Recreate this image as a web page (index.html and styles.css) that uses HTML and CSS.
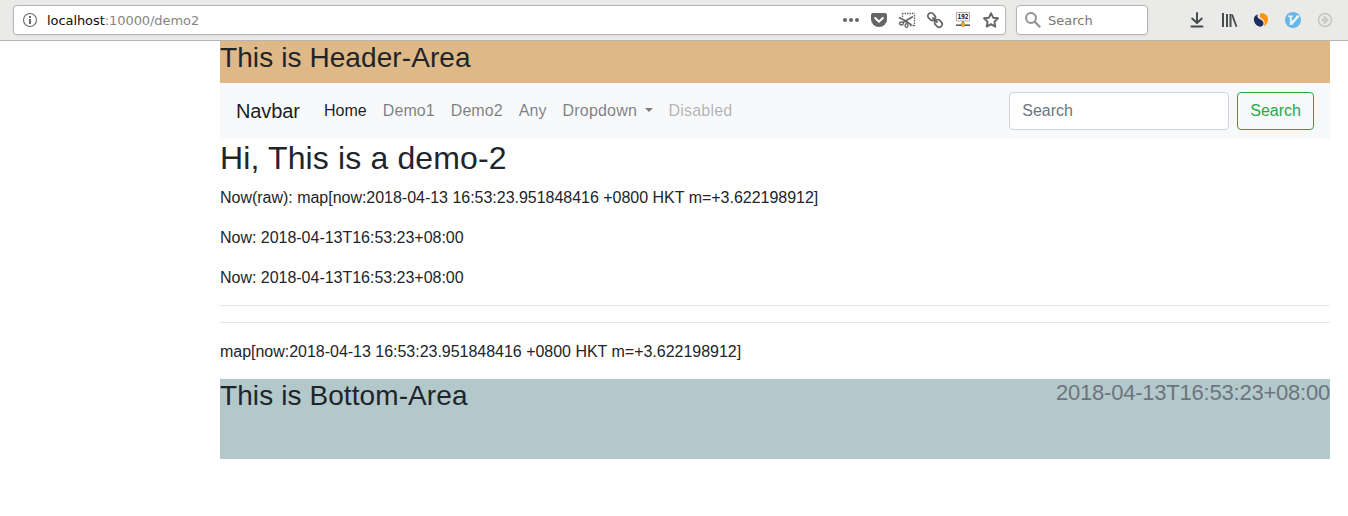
FILE: index.html
```html
<!DOCTYPE html>
<html lang="en">
<head>
<meta charset="utf-8">
<title>demo2</title>
<link rel="stylesheet" href="styles.css">
</head>
<body>
<div class="toolbar">
  <div class="field url-bar">
    <svg class="icon info" viewBox="0 0 16 16"><circle cx="8" cy="8" r="6.500" fill="none" stroke="#6a6a6a" stroke-width="1.100"/><path d="M7 4h2v2H7zM7 7h2v5H7z" fill="#6a6a6a"/></svg>
    <span class="url"><span class="host">localhost</span>:10000/demo2</span>
    <div class="page-actions">
      <svg class="icon" viewBox="0 0 16 16" fill="#666"><circle cx="2" cy="8" r="2"/><circle cx="8" cy="8" r="2"/><circle cx="14" cy="8" r="2"/></svg>
      <svg class="icon" viewBox="0 0 16 16"><path d="M2 1h12a2 2 0 0 1 2 2v4.500a8 7.500 0 0 1-16 0V3a2 2 0 0 1 2-2z" fill="#666"/><path d="M4.200 6L8 9.700 11.800 6" fill="none" stroke="#fff" stroke-width="2" stroke-linecap="round" stroke-linejoin="round"/></svg>
      <svg class="icon" viewBox="0 0 16 16" fill="none" stroke="#666"><path d="M3 1.500h13M15.500 3v11M3.500 1v4M11 13.500h5" stroke-width="1.300" stroke-dasharray="1.500 1"/><path d="M0 5.500L6 8.500 12.500 13M14 4.500L4 10.500" stroke-width="1.600"/><ellipse cx="2.400" cy="11.500" rx="1.900" ry="1.500" stroke-width="1.400"/><ellipse cx="7.500" cy="13.500" rx="1.400" ry="1.900" stroke-width="1.400"/><path d="M7 8.500l.6 3.500" stroke-width="1.400"/></svg>
      <svg class="icon" viewBox="0 0 16 16" fill="none" stroke="#666" stroke-width="1.700"><g transform="rotate(45 8 8)"><rect x="-.8" y="5" width="8" height="6" rx="2.800"/><rect x="8.800" y="5" width="8" height="6" rx="2.800"/><path d="M4.500 8h7" stroke-width="2"/></g></svg>
      <svg class="icon" viewBox="0 0 16 16"><path d="M1.500.5h13v8.500h-13z" fill="#fff" stroke="#aaa"/><text class="ip-label" x="8" y="7" textLength="11" lengthAdjust="spacingAndGlyphs">192</text><path d="M1 13.200h14" stroke="#526066" stroke-width="1.600"/><path d="M8 9v2" stroke="#444"/><rect x="6.300" y="10.800" width="3.400" height="3.800" rx="1" fill="#fba91e" stroke="#a87220" stroke-width=".5"/></svg>
      <svg class="icon" viewBox="0 0 16 16"><path d="M8 1.200l2.100 4.500 4.900.6-3.600 3.400.9 4.900L8 12.200l-4.300 2.400.9-4.900L1 6.300l4.900-.6z" fill="none" stroke="#666" stroke-width="1.900" stroke-linejoin="round"/></svg>
    </div>
  </div>
  <div class="field search-bar">
    <svg class="icon" viewBox="0 0 16 16" fill="none" stroke="#909090"><circle cx="6" cy="6" r="4.900" stroke-width="2"/><path d="M9.500 9.500l5.700 5.700" stroke-width="2.200"/></svg>
    <span class="search-hint">Search</span>
  </div>
  <div class="tools">
    <svg class="icon" viewBox="0 0 16 16" fill="none" stroke="#474b4d" stroke-width="2"><path d="M8 1v9.500M3.200 6.500L8 11l4.800-4.500M2.500 14.500h11" stroke-linecap="round" stroke-linejoin="round"/></svg>
    <svg class="icon" viewBox="0 0 16 16" fill="none" stroke="#474b4d" stroke-width="2"><path d="M2 1v14M6 2v13M9.500 2v13"/><path d="M11 2.500l4.500 12.300" stroke-width="1.800"/></svg>
    <svg class="icon" viewBox="0 0 16 16"><path d="M5 2.500C2 3 .5 5.500 1 8.500c.6 3.500 3 5.800 6 6.200 2.600 0 4-2 3.300-4.400C9.400 7.200 5.600 7.500 4.600 5c-.4-1 0-1.900.4-2.500z" fill="#202c5c"/><path d="M7.500 1.200c4.500-.5 7.700 2 7.500 6.300-.2 3.500-2 5.500-4.200 6.700 1.300-3.400 1.200-5.200-1.500-7.200C6.500 5.500 6 3 7.500 1.200z" fill="#ff940a"/></svg>
    <svg class="icon" viewBox="0 0 16 16"><circle cx="8" cy="8" r="8" fill="#65b5e8"/><path d="M3 3.500h4.800v1.300l-1 .2v4.300L11 4.800V3.500h3.300v1.300L7 13H4.800V5L3 4.800z" fill="#e7f4fc"/></svg>
    <svg class="icon" viewBox="0 0 16 16" fill="none" stroke="#c5c5c4"><circle cx="8" cy="8" r="6.500" stroke-width="1.500"/><path d="M4.500 8H8M6.800 4.500L10.500 8l-3.700 3.500" stroke-width="2"/></svg>
  </div>
</div>
<div class="container">
  <header class="header-area"><h3>This is Header-Area</h3></header>
  <nav class="navbar">
    <a class="brand">Navbar</a>
    <div class="nav-links">
      <a class="nav-link active">Home</a>
      <a class="nav-link">Demo1</a>
      <a class="nav-link">Demo2</a>
      <a class="nav-link">Any</a>
      <a class="nav-link wide dropdown">Dropdown</a>
      <a class="nav-link wide disabled">Disabled</a>
    </div>
    <form class="nav-form">
      <input class="form-control" type="text" placeholder="Search">
      <button class="btn" type="button">Search</button>
    </form>
  </nav>
  <main>
    <h2>Hi, This is a demo-2</h2>
    <p>Now(raw): map[now:2018-04-13 16:53:23.951848416 +0800 HKT m=+3.622198912]</p>
    <p>Now: 2018-04-13T16:53:23+08:00</p>
    <p>Now: 2018-04-13T16:53:23+08:00</p>
    <hr>
    <hr>
    <p>map[now:2018-04-13 16:53:23.951848416 +0800 HKT m=+3.622198912]</p>
  </main>
  <footer class="bottom-area">
    <h3>This is Bottom-Area</h3>
    <small class="timestamp">2018-04-13T16:53:23+08:00</small>
  </footer>
</div>
</body>
</html>
```
FILE: styles.css
```css
*, *::before, *::after { box-sizing: border-box; }

body {
  margin: 0;
  background: #fff;
  color: #212529;
  font: 16px/1.5 "Liberation Sans", Arial, sans-serif;
}

.toolbar {
  display: flex;
  align-items: center;
  height: 41px;
  padding: 0 15px 1px 13px;
  background: #eaeae9;
  border-bottom: 1px solid #b4b4b2;
  font: 13px/16px "DejaVu Sans", sans-serif;
}

.icon {
  display: block;
  flex: none;
  width: 16px;
  height: 16px;
  overflow: visible;
}

.field {
  display: flex;
  align-items: center;
  height: 30px;
  background: #fff;
  border: 1px solid #b5b5b3;
  border-radius: 4px;
  box-shadow: 0 1px 3px rgba(0, 0, 0, .06);
}

.url-bar { width: 993px; padding: 0 6px 0 8px; }
.url { margin-left: 9px; padding-top: 2px; color: #858585; letter-spacing: -.07px; }
.host { color: #0c0c0d; }
.page-actions { display: flex; gap: 12px; margin-left: auto; }
.ip-label { font: bold 7px "DejaVu Sans", sans-serif; text-anchor: middle; fill: #222; }

.search-bar {
  width: 132px;
  margin-left: 10px;
  padding: 0 8px;
  gap: 7px;
  color: #777;
}
.search-hint { padding-top: 2px; }

.tools { display: flex; gap: 16px; margin-left: auto; }

.container { width: 1110px; margin-left: 220px; }

h2, h3 { margin: 0 0 8px; font-weight: 400; line-height: 1.2; }
h2 { font-size: 32px; letter-spacing: .14px; }
h3 { font-size: 28px; letter-spacing: .09px; }
p { margin: 0 0 16px; padding-top: 1.4px; line-height: 22.6px; letter-spacing: -.02px; }
hr { margin: 16px 0; border: 0; border-top: 1px solid rgba(0, 0, 0, .1); }
main { padding-top: .4px; }

.header-area { height: 41.6px; background: #deb887; }

.navbar {
  display: flex;
  align-items: center;
  height: 56px;
  padding: 8px 16px;
  background: #f8f9fa;
}

.brand { margin-right: 16px; font-size: 20px; line-height: 30px; color: rgba(0, 0, 0, .9); letter-spacing: -.1px; }
.nav-links { display: flex; }
.nav-link { padding: 8.45px 8px 7.55px; color: rgba(0, 0, 0, .5); letter-spacing: .07px; }
.nav-link.wide { letter-spacing: .2px; }
.nav-link.active { color: rgba(0, 0, 0, .9); }
.nav-link.disabled { color: rgba(0, 0, 0, .3); }

.dropdown::after {
  content: "";
  display: inline-block;
  margin-left: 7.5px;
  vertical-align: 4px;
  border-top: 4.8px solid;
  border-left: 4.8px solid transparent;
  border-right: 4.8px solid transparent;
}

.nav-form { display: flex; gap: 8px; margin-left: auto; }

.form-control {
  width: 220px;
  height: 38px;
  padding: 6.45px 12px 5.55px;
  border: 1px solid #ced4da;
  border-radius: 4px;
  background: #fff;
  font: inherit;
}
.form-control::placeholder { color: #6c757d; opacity: 1; }

.btn {
  height: 38px;
  padding: 6.45px 12px 5.55px;
  border: 1px solid #28a745;
  border-radius: 4px;
  background: transparent;
  color: #28a745;
  font: inherit;
}

.bottom-area {
  display: flex;
  justify-content: space-between;
  align-items: flex-start;
  height: 80px;
  background: #b3c8cb;
}

.timestamp {
  padding-top: 1px;
  font-size: 22px;
  line-height: 1.2;
  letter-spacing: -.22px;
  color: #6c757d;
}
```
